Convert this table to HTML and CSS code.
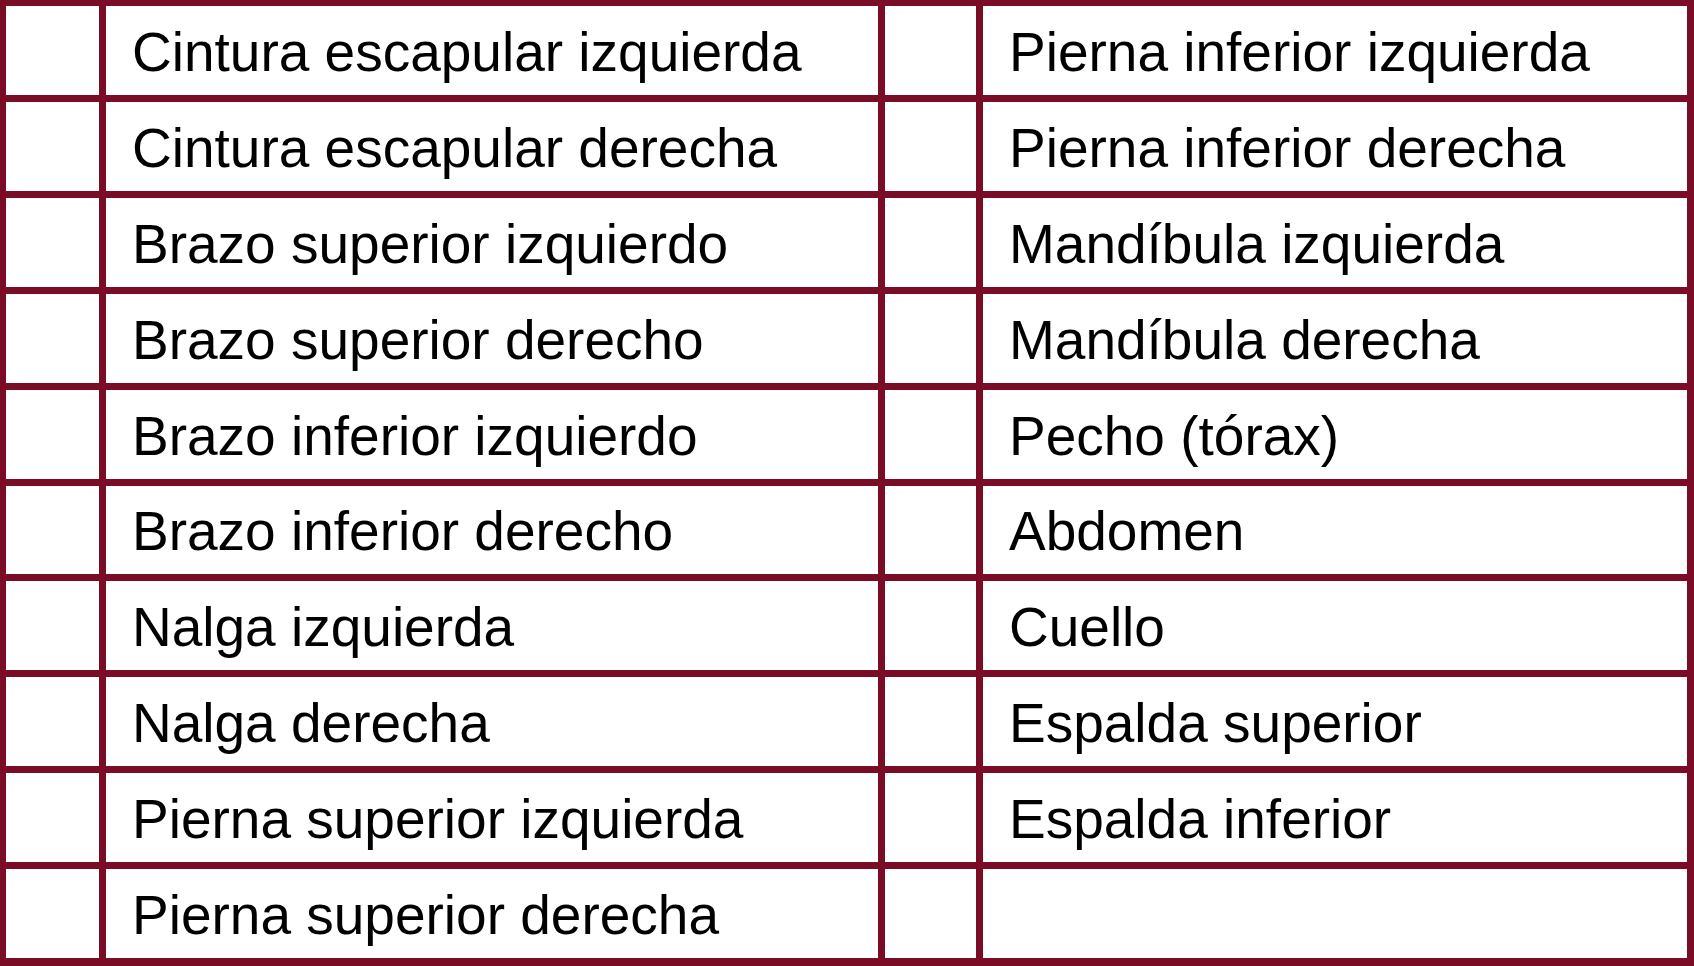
FILE: index.html
```html
<!DOCTYPE html>
<html lang="es">
<head>
<meta charset="utf-8">
<title>Tabla</title>
<link rel="stylesheet" href="styles.css">
</head>
<body>
<div class="grid">
  <div class="cell"></div><div class="cell">Cintura escapular izquierda</div><div class="cell"></div><div class="cell">Pierna inferior izquierda</div>
  <div class="cell"></div><div class="cell">Cintura escapular derecha</div><div class="cell"></div><div class="cell">Pierna inferior derecha</div>
  <div class="cell"></div><div class="cell">Brazo superior izquierdo</div><div class="cell"></div><div class="cell">Mandíbula izquierda</div>
  <div class="cell"></div><div class="cell">Brazo superior derecho</div><div class="cell"></div><div class="cell">Mandíbula derecha</div>
  <div class="cell"></div><div class="cell">Brazo inferior izquierdo</div><div class="cell"></div><div class="cell">Pecho (tórax)</div>
  <div class="cell"></div><div class="cell">Brazo inferior derecho</div><div class="cell"></div><div class="cell">Abdomen</div>
  <div class="cell"></div><div class="cell">Nalga izquierda</div><div class="cell"></div><div class="cell">Cuello</div>
  <div class="cell"></div><div class="cell">Nalga derecha</div><div class="cell"></div><div class="cell">Espalda superior</div>
  <div class="cell"></div><div class="cell">Pierna superior izquierda</div><div class="cell"></div><div class="cell">Espalda inferior</div>
  <div class="cell"></div><div class="cell">Pierna superior derecha</div><div class="cell"></div><div class="cell"></div>
</div>
</body>
</html>
```
FILE: styles.css
```css
html, body {
  margin: 0;
  padding: 0;
  background: #ffffff;
}
.grid {
  width: 1694px;
  height: 966px;
  box-sizing: border-box;
  background: #7b0c26;
  padding: 6px 7px 8px 6px;
  display: grid;
  grid-template-columns: 93px 772px 91px 704px;
  grid-template-rows: repeat(10, 1fr);
  gap: 7px;
}
.cell {
  background: #ffffff;
  display: flex;
  align-items: center;
  padding: 3px 0 0 26px;
  font-family: "Liberation Sans", Arial, sans-serif;
  font-size: 55px;
  color: #000000;
  white-space: nowrap;
}
```
